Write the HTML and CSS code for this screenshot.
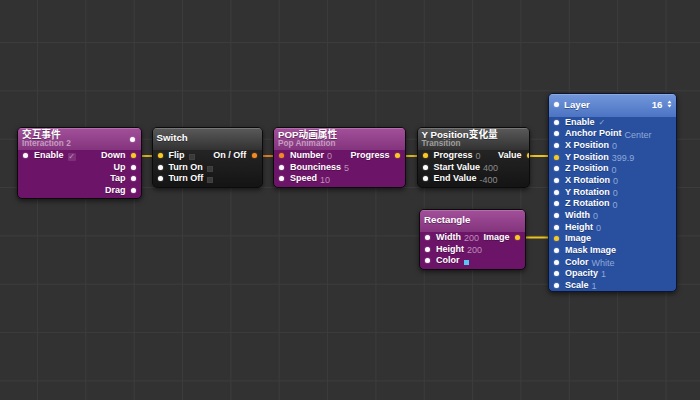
FILE: index.html
```html
<!DOCTYPE html>
<html>
<head>
<meta charset="utf-8">
<link rel="stylesheet" href="styles.css">
</head>
<body>
<div class="canvas">
  <svg class="wires" width="700" height="400" viewBox="0 0 700 400">
    <line x1="133" y1="156" x2="160" y2="156" class="w-yellow"/>
    <line x1="254" y1="156" x2="282" y2="156" class="w-orange"/>
    <line x1="398" y1="156" x2="425" y2="156" class="w-yellow"/>
    <line x1="521" y1="156" x2="556" y2="156" class="w-yellow"/>
    <line x1="517" y1="237.5" x2="556" y2="237.5" class="w-yellow"/>
  </svg>

  <div class="node purple n1">
    <div class="head two">
      <div class="titles"><div class="title">交互事件</div><div class="sub">Interaction 2</div></div>
      <span class="dot"></span>
    </div>
    <div class="body">
      <div class="col">
        <div class="port"><span class="dot"></span><span class="lbl">Enable</span><span class="check boxed">✓</span></div>
      </div>
      <div class="col out">
        <div class="port"><span class="lbl">Down</span><span class="dot yellow"></span></div>
        <div class="port"><span class="lbl">Up</span><span class="dot"></span></div>
        <div class="port"><span class="lbl">Tap</span><span class="dot"></span></div>
        <div class="port"><span class="lbl">Drag</span><span class="dot"></span></div>
      </div>
    </div>
  </div>

  <div class="node dark n2">
    <div class="head">
      <div class="titles"><div class="title">Switch</div></div>
    </div>
    <div class="body">
      <div class="col">
        <div class="port"><span class="dot yellow"></span><span class="lbl">Flip</span><span class="box"></span></div>
        <div class="port"><span class="dot"></span><span class="lbl">Turn On</span><span class="box"></span></div>
        <div class="port"><span class="dot"></span><span class="lbl">Turn Off</span><span class="box"></span></div>
      </div>
      <div class="col out">
        <div class="port"><span class="lbl">On / Off</span><span class="dot orange"></span></div>
      </div>
    </div>
  </div>

  <div class="node purple n3">
    <div class="head two">
      <div class="titles"><div class="title">POP动画属性</div><div class="sub">Pop Animation</div></div>
    </div>
    <div class="body">
      <div class="col">
        <div class="port"><span class="dot orange"></span><span class="lbl">Number</span><span class="val">0</span></div>
        <div class="port"><span class="dot"></span><span class="lbl">Bounciness</span><span class="val">5</span></div>
        <div class="port"><span class="dot"></span><span class="lbl">Speed</span><span class="val">10</span></div>
      </div>
      <div class="col out">
        <div class="port"><span class="lbl">Progress</span><span class="dot yellow"></span></div>
      </div>
    </div>
  </div>

  <div class="node dark n4">
    <div class="head two">
      <div class="titles"><div class="title">Y Position变化量</div><div class="sub">Transition</div></div>
    </div>
    <div class="body">
      <div class="col">
        <div class="port"><span class="dot yellow"></span><span class="lbl">Progress</span><span class="val">0</span></div>
        <div class="port"><span class="dot"></span><span class="lbl">Start Value</span><span class="val">400</span></div>
        <div class="port"><span class="dot"></span><span class="lbl">End Value</span><span class="val">-400</span></div>
      </div>
      <div class="col out">
        <div class="port"><span class="lbl">Value</span><span class="dot yellow"></span></div>
      </div>
    </div>
  </div>

  <div class="node purple n5">
    <div class="head">
      <div class="titles"><div class="title">Rectangle</div></div>
    </div>
    <div class="body">
      <div class="col">
        <div class="port"><span class="dot"></span><span class="lbl">Width</span><span class="val">200</span></div>
        <div class="port"><span class="dot"></span><span class="lbl">Height</span><span class="val">200</span></div>
        <div class="port"><span class="dot"></span><span class="lbl">Color</span><span class="swatch"></span></div>
      </div>
      <div class="col out">
        <div class="port"><span class="lbl">Image</span><span class="dot yellow"></span></div>
      </div>
    </div>
  </div>

  <div class="node blue n6">
    <div class="head layer-head">
      <span class="dot"></span>
      <div class="titles"><div class="title">Layer</div></div>
      <span class="count">16</span>
      <svg class="stepper" width="5" height="8" viewBox="0 0 5 8"><path d="M2.5 0.5 L4.6 3.2 L0.4 3.2 Z M2.5 7.5 L4.6 4.8 L0.4 4.8 Z" fill="#fff"/></svg>
    </div>
    <div class="body">
      <div class="col">
        <div class="port"><span class="dot"></span><span class="lbl">Enable</span><span class="check">✓</span></div>
        <div class="port"><span class="dot"></span><span class="lbl">Anchor Point</span><span class="val">Center</span></div>
        <div class="port"><span class="dot"></span><span class="lbl">X Position</span><span class="val">0</span></div>
        <div class="port"><span class="dot yellow"></span><span class="lbl">Y Position</span><span class="val">399.9</span></div>
        <div class="port"><span class="dot"></span><span class="lbl">Z Position</span><span class="val">0</span></div>
        <div class="port"><span class="dot"></span><span class="lbl">X Rotation</span><span class="val">0</span></div>
        <div class="port"><span class="dot"></span><span class="lbl">Y Rotation</span><span class="val">0</span></div>
        <div class="port"><span class="dot"></span><span class="lbl">Z Rotation</span><span class="val">0</span></div>
        <div class="port"><span class="dot"></span><span class="lbl">Width</span><span class="val">0</span></div>
        <div class="port"><span class="dot"></span><span class="lbl">Height</span><span class="val">0</span></div>
        <div class="port"><span class="dot yellow"></span><span class="lbl">Image</span></div>
        <div class="port"><span class="dot"></span><span class="lbl">Mask Image</span></div>
        <div class="port"><span class="dot"></span><span class="lbl">Color</span><span class="val">White</span></div>
        <div class="port"><span class="dot"></span><span class="lbl">Opacity</span><span class="val">1</span></div>
        <div class="port"><span class="dot"></span><span class="lbl">Scale</span><span class="val">1</span></div>
      </div>
    </div>
  </div>
</div>
</body>
</html>
```

FILE: styles.css
```css
html, body {
  margin: 0;
  padding: 0;
}
body {
  width: 700px;
  height: 400px;
  overflow: hidden;
  background-color: #323232;
  font-family: "Liberation Sans", "Noto Sans CJK SC", sans-serif;
}
.canvas {
  position: relative;
  width: 700px;
  height: 400px;
  overflow: hidden;
  background-color: #323232;
  background-image:
    linear-gradient(to right, #3c3c3c 1px, transparent 1px),
    linear-gradient(to bottom, #3c3c3c 1px, transparent 1px);
  background-size: 48.35px 48.35px;
  background-position: 37px 42px;
}
.wires {
  position: absolute;
  left: 0;
  top: 0;
}
.wires line {
  stroke-width: 1.8;
}
.w-yellow { stroke: #ecc41c; }
.w-orange { stroke: #f08a1e; }

.node {
  position: absolute;
  box-sizing: border-box;
  border: 1px solid #0b0b0b;
  border-radius: 5px;
  overflow: hidden;
  box-shadow: 0 2px 5px rgba(0, 0, 0, 0.55);
  color: #fff;
  font-weight: bold;
}
.n1 { left: 17px; top: 126.5px; width: 125px; }
.n2 { left: 151.5px; top: 127.4px; width: 111px; }
.n3 { left: 273px; top: 126.5px; width: 133px; }
.n4 { left: 416.5px; top: 126.5px; width: 113px; }
.n5 { left: 419px; top: 209.3px; width: 107px; }
.n6 { left: 548px; top: 93px; width: 128.5px; height: 198.5px; }

.purple { background: #6c1467; }
.purple .head { background: linear-gradient(#a2509a, #84337d); }
.dark { background: linear-gradient(#2e2e2e, #141414); }
.dark .head { background: linear-gradient(#5a5a5a, #323232); }
.blue { background: #29509f; border-color: #0c1630; }
.blue .head { background: linear-gradient(#7397db, #4b74c3); }

.head {
  display: flex;
  align-items: center;
  box-sizing: border-box;
  height: 21.5px;
  padding: 0 4px 3px 4px;
  box-shadow: inset 0 1px 0 rgba(255, 255, 255, 0.18);
}
.head.two {
  height: 22.4px;
  padding: 1px 4px 0 4px;
}
.titles {
  flex: 1;
  min-width: 0;
}
.title {
  font-size: 9.7px;
  line-height: 11px;
  white-space: nowrap;
  text-shadow: 0 1px 0 rgba(0, 0, 0, 0.35);
}
.sub {
  font-size: 8.2px;
  line-height: 8.5px;
  color: rgba(255, 255, 255, 0.5);
  white-space: nowrap;
}
.head .dot {
  margin-right: 2px;
  margin-top: 1px;
}
.layer-head {
  height: 22.5px;
  padding: 0 4px 2px 5px;
}
.layer-head .dot {
  margin: 0 5px 0 0;
}
.count {
  font-size: 9.7px;
  margin-right: 4px;
}
.stepper {
  display: block;
}

.body {
  display: flex;
  padding: 0 5px 1.8px 5px;
}
.col {
  display: flex;
  flex-direction: column;
}
.col.out {
  margin-left: auto;
  align-items: flex-end;
}
.port {
  display: flex;
  align-items: center;
  height: 11.65px;
  white-space: nowrap;
}
.lbl {
  font-size: 9px;
  line-height: 11px;
  text-shadow: 0 1px 0 rgba(0, 0, 0, 0.3);
}
.col .port .dot + .lbl {
  margin-left: 6px;
}
.col.out .lbl {
  margin-right: 5.5px;
}
.dot {
  display: block;
  flex: none;
  width: 5px;
  height: 5px;
  border-radius: 50%;
  background: #fbfbfb;
  box-shadow: 0 0 1.5px rgba(255, 255, 255, 0.6);
}
.dot.yellow {
  background: #f6c928;
  box-shadow: 0 0 1.5px rgba(246, 201, 40, 0.7);
}
.dot.orange {
  background: #f28a24;
  box-shadow: 0 0 1.5px rgba(242, 138, 36, 0.7);
}
.val {
  font-size: 9px;
  font-weight: normal;
  line-height: 11px;
  margin-left: 3px;
  margin-top: 2.5px;
}
.purple .val { color: #bb90b7; }
.dark .val { color: #8c8c8c; }
.blue .val { color: #8ea8d8; }
.check {
  font-family: "DejaVu Sans", sans-serif;
  font-size: 8px;
  line-height: 8px;
  font-weight: normal;
  color: rgba(255, 255, 255, 0.5);
  margin-left: 4px;
  margin-top: 2px;
}
.check.boxed {
  width: 8px;
  height: 8px;
  line-height: 8px;
  text-align: center;
  border-radius: 1px;
  background: rgba(255, 255, 255, 0.12);
}
.box {
  display: block;
  width: 6px;
  height: 6px;
  margin-left: 4px;
  margin-top: 3px;
  border-radius: 1px;
  background: #3a3a3a;
  box-shadow: inset 0 0 0 0.5px #4a4a4a;
}
.swatch {
  display: block;
  width: 5px;
  height: 5px;
  margin-left: 4px;
  margin-top: 2.5px;
  background: #5cc4f2;
}
```
